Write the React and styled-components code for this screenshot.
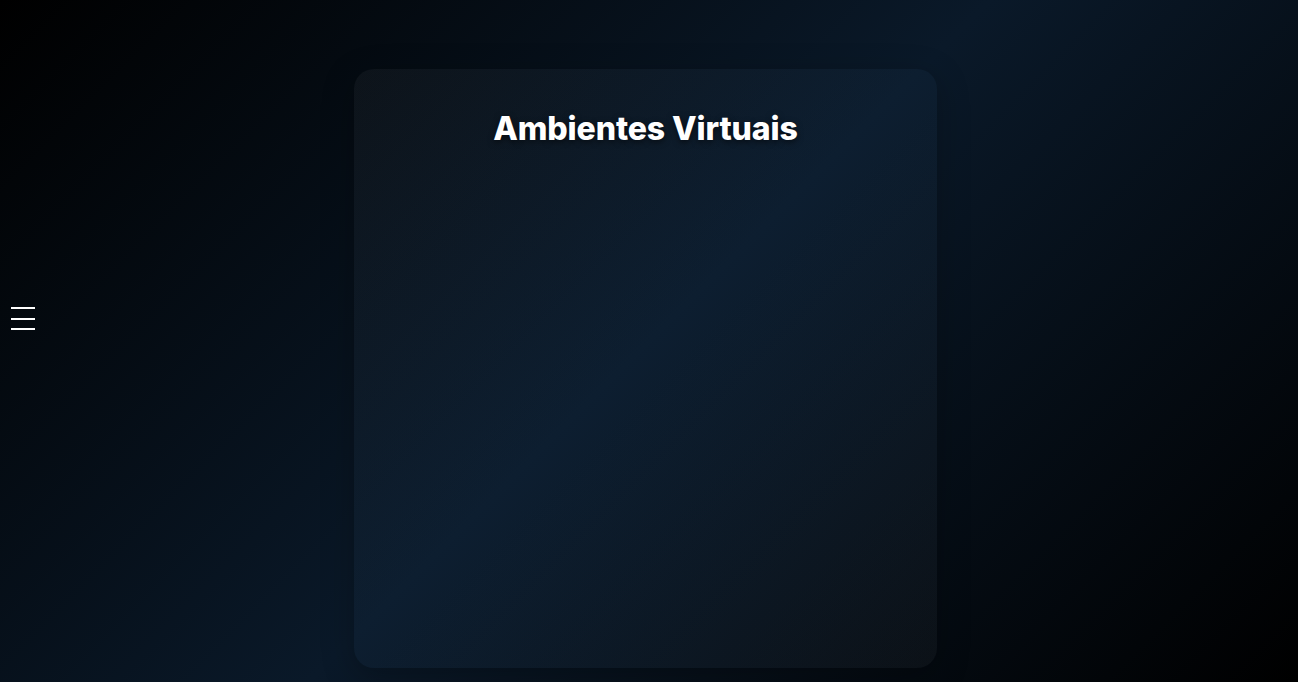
import React from 'react';
import styled, { createGlobalStyle } from 'styled-components';

const GlobalStyle = createGlobalStyle`
  html, body {
    margin: 0;
    padding: 0;
    height: 100%;
  }
  body {
    font-family: Inter, "Liberation Sans", sans-serif;
    background: linear-gradient(135deg, #000000 0%, #0a1929 50%, #000000 100%);
    color: #fff;
    overflow: hidden;
  }
`;

const Page = styled.main`
  height: 682px;
  box-sizing: border-box;
  padding: 69px 0 14px;
  display: flex;
  justify-content: center;
`;

const MenuButton = styled.button`
  position: fixed;
  left: 11px;
  top: 307px;
  width: 24px;
  height: 23px;
  padding: 0;
  border: none;
  background: transparent;
  display: flex;
  flex-direction: column;
  justify-content: space-between;
  cursor: pointer;
`;

const MenuLine = styled.span`
  display: block;
  height: 2px;
  width: 100%;
  background: #ffffff;
`;

const Card = styled.section`
  width: 583px;
  margin-right: 7px;
  box-sizing: border-box;
  border-radius: 20px;
  padding: 39px 24px 24px;
  background: linear-gradient(135deg, rgba(255, 255, 255, 0.035) 0%, rgba(30, 60, 90, 0.14) 50%, rgba(255, 255, 255, 0.03) 100%);
  box-shadow: 0 8px 32px rgba(0, 0, 0, 0.25);
`;

const Title = styled.h1`
  margin: 0;
  text-align: center;
  font-size: 32px;
  font-weight: 800;
  letter-spacing: -0.1px;
  line-height: 1.3;
  color: #ffffff;
  text-shadow: 0 2px 6px rgba(0, 0, 0, 0.6);
`;

export default function App() {
  return (
    <>
      <GlobalStyle />
      <MenuButton aria-label="Menu">
        <MenuLine />
        <MenuLine />
        <MenuLine />
      </MenuButton>
      <Page>
        <Card>
          <Title>Ambientes Virtuais</Title>
        </Card>
      </Page>
    </>
  );
}
